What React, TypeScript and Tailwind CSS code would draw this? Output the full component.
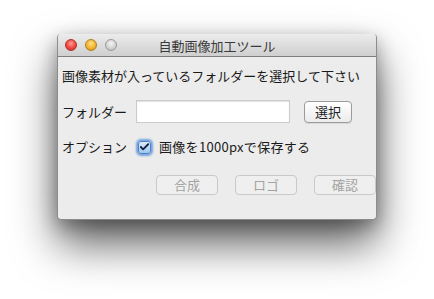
import { Check } from "lucide-react";

const FONT = "font-['Lucida_Grande','Noto_Sans_CJK_JP',sans-serif]";

function Light({ tone }: { tone: "red" | "amber" | "gray" }) {
  const styles = {
    red: "bg-[radial-gradient(circle_at_50%_35%,#ff9c94_0%,#f0463f_55%,#c22a25_100%)] border-[#a9322d]",
    amber: "bg-[radial-gradient(circle_at_50%_35%,#ffe08a_0%,#f2b531_55%,#c98a14_100%)] border-[#b17f1c]",
    gray: "bg-[radial-gradient(circle_at_50%_35%,#f4f4f4_0%,#d4d4d4_55%,#b4b4b4_100%)] border-[#9a9a9a]",
  };
  return <span className={`h-[12px] w-[12px] rounded-full border ${styles[tone]}`} />;
}

function MacButton({ label, disabled, className = "" }: { label: string; disabled?: boolean; className?: string }) {
  return (
    <button
      className={`flex h-[20px] items-center justify-center rounded-[4px] border text-[13px] ${
        disabled
          ? "border-[#c9c9c9] bg-[#efefef] text-[#a3a3a3]"
          : "border-[#9b9b9b] bg-gradient-to-b from-[#ffffff] to-[#ececec] text-[#222] shadow-[0_1px_0_rgba(0,0,0,0.08)]"
      } ${className}`}
    >
      {label}
    </button>
  );
}

export default function App() {
  return (
    <div className={`h-[299px] w-[434px] overflow-hidden bg-white pl-[57px] pt-[34px] ${FONT}`}>
      <div className="flex h-[186px] w-[320px] flex-col overflow-hidden rounded-[4px] border-x border-b border-[#8c8c8c] bg-[#ececec] shadow-[0_24px_44px_rgba(0,0,0,0.62),0_6px_18px_rgba(0,0,0,0.3)]">
        {/* Title bar */}
        <div className="relative flex h-[23px] shrink-0 items-center border-b border-[#7e7e7e] bg-gradient-to-b from-[#ececec] to-[#cfcfcf] pl-[7px]">
          <div className="flex items-center gap-[8px]">
            <Light tone="red" />
            <Light tone="amber" />
            <Light tone="gray" />
          </div>
          <span className="absolute inset-x-0 text-center text-[13px] leading-[23px] text-[#3a3a3a]">
            自動画像加工ツール
          </span>
        </div>

        {/* Content */}
        <div className="flex flex-col pl-[4px] pt-[9px] text-[13px] text-[#1a1a1a]">
          <div className="flex h-[20px] items-center">画像素材が入っているフォルダーを選択して下さい</div>

          <div className="mt-[14px] flex h-[23px] items-center">
            <span className="w-[74px]">フォルダー</span>
            <div className="h-[23px] w-[154px] border border-[#cbcbcb] bg-white shadow-[inset_0_1px_1px_rgba(0,0,0,0.12)]" />
            <MacButton label="選択" className="ml-[14px] h-[22px] w-[48px]" />
          </div>

          <div className="mt-[13px] flex h-[22px] items-center">
            <span className="w-[76px]">オプション</span>
            <span className="flex h-[13px] w-[13px] items-center justify-center rounded-[3px] border border-[#4f7fbd] bg-gradient-to-b from-[#dcebfb] to-[#9cc6f2] shadow-[0_0_2px_2px_rgba(80,140,220,0.75)]">
              <Check className="h-[12px] w-[12px] text-[#16233f]" strokeWidth={4} />
            </span>
            <span className="ml-[8px] tracking-[0.3px]">画像を1000pxで保存する</span>
          </div>

          <div className="mt-[17px] flex h-[20px] items-center pl-[94px]">
            <MacButton label="合成" disabled className="w-[63px]" />
            <MacButton label="ロゴ" disabled className="ml-[17px] w-[63px]" />
            <MacButton label="確認" disabled className="ml-[17px] w-[63px]" />
          </div>
        </div>
      </div>
    </div>
  );
}
